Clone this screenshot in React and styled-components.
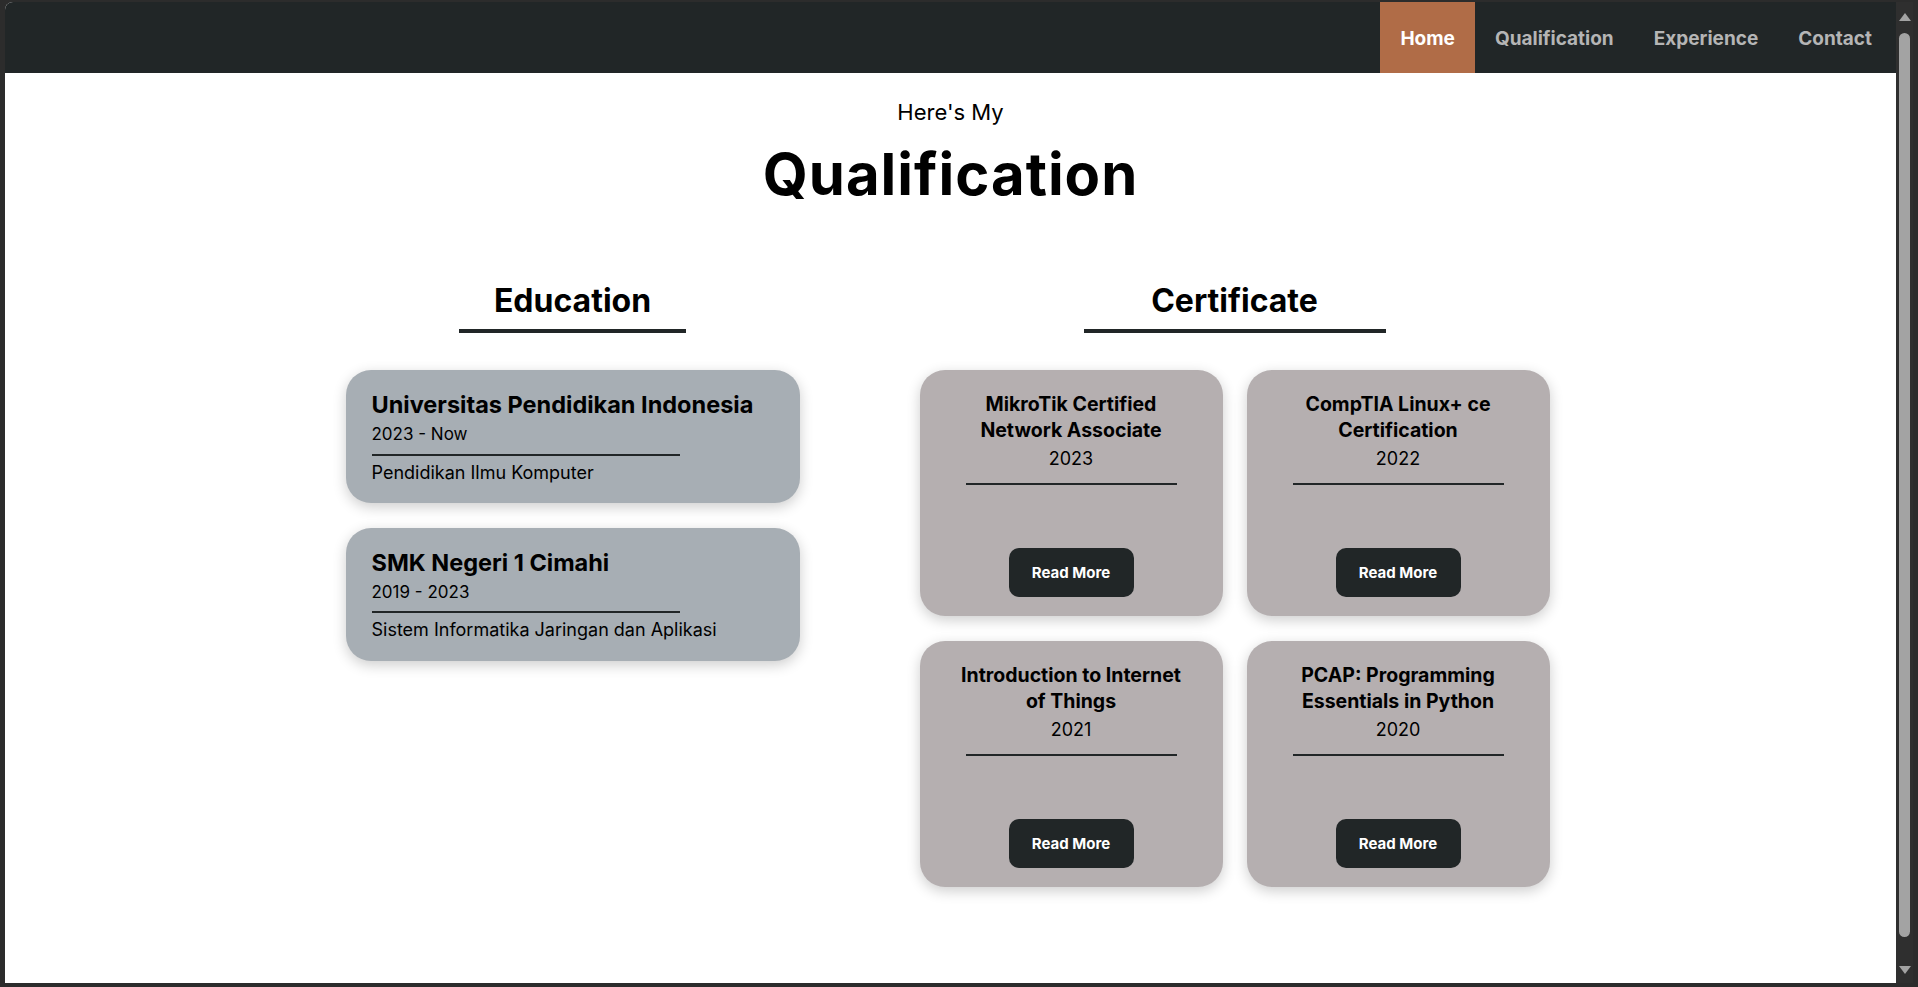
import React from "react";
import styled, { createGlobalStyle } from "styled-components";

/* ============================ Styles ==================================== */
const GlobalStyle = createGlobalStyle`
    html, body {
        margin:0;
        padding:0;
        height:100%;
        overflow:hidden;
        background-color:#2c2c2c;
        font-family:"Inter", "Open Sans", sans-serif;
    }
`;

const Sframe = styled.div` // ブラウザ枠
    display:flex;
    height:100vh;
    box-sizing:border-box;
    padding:2px 5px 4px 5px;
`;

const Spage = styled.div` // ページ本体
    flex:1;
    display:flex;
    flex-direction:column;
    background-color:#FFFFFF;
    border-radius:8px 0px 0px 0px;
    overflow:hidden;
`;

const Sscrollbar = styled.div` // スクロールバー
    width:17px;
    display:flex;
    flex-direction:column;
    align-items:center;
    background-color:#2f2f2f;
    padding:11px 0px 9px 0px;
    box-sizing:border-box;
`;

const Sarrow = styled.div`
    width:0;
    height:0;
    border-left:6px solid transparent;
    border-right:6px solid transparent;
    ${props => props.down
        ? "border-top:8px solid #a3a3a3;"
        : "border-bottom:8px solid #a3a3a3;"}
`;

const Sthumb = styled.div`
    flex:1;
    width:11px;
    margin:12px 0px 29px 0px;
    border-radius:6px;
    background-color:#a3a3a3;
`;

const Snav = styled.nav` // ナビゲーションバー
    display:flex;
    justify-content:flex-end;
    height:71px;
    padding-right:4px;
    background-color:#212627;
    flex-shrink:0;
`;

const SnavItem = styled.a`
    display:flex;
    align-items:center;
    padding:1px 20px 0px 20px;
    font-size:19px;
    font-weight:700;
    text-decoration:none;
    color:${props => props.active ? "#FFFFFF" : "#b5b5b5"};
    background-color:${props => props.active ? "#b06c47" : "transparent"};
`;

const SheroSmall = styled.p`
    margin:26px 0px 0px 0px;
    text-align:center;
    font-size:22px;
    line-height:1.2;
    color:#000000;
`;

const SheroTitle = styled.h1`
    margin:15px 0px 0px 0px;
    text-align:center;
    font-size:58px;
    letter-spacing:1px;
    line-height:1.2;
    font-weight:700;
    color:#000000;
`;

const Scolumns = styled.div` // 学歴と資格の2カラム
    display:flex;
    justify-content:center;
    align-items:flex-start;
    gap:120px;
    margin:72px 6px 0px 0px;
`;

const Scolumn = styled.section`
    display:flex;
    flex-direction:column;
    align-items:center;
    width:${props => props.w}px;
`;

const SsectionTitle = styled.h2`
    margin:0;
    font-size:32px;
    line-height:1.2;
    font-weight:700;
    color:#000000;
`;

const SsectionLine = styled.div`
    width:${props => props.w}px;
    height:4px;
    margin:9px 0px 37px 0px;
    background-color:#212627;
`;

const ScardList = styled.div`
    display:flex;
    flex-direction:column;
    gap:25px;
    width:100%;
`;

const SeduCard = styled.div` // 学歴カード
    background-color:#a7aeb4;
    border-radius:25px;
    padding:20px 26px 20px 26px;
    box-shadow:0px 4px 14px rgba(0, 0, 0, 0.2);
`;

const SeduTitle = styled.h3`
    margin:0;
    font-size:23.5px;
    line-height:29px;
    font-weight:700;
    color:#000000;
`;

const SeduYear = styled.p`
    margin:5px 0px 0px 0px;
    font-size:17px;
    line-height:1.25;
    color:#000000;
`;

const SeduMajor = styled.p`
    margin:6px 0px 0px 0px;
    font-size:18px;
    line-height:1.2;
    color:#000000;
`;

const SeduLine = styled.div`
    width:308px;
    height:2px;
    margin-top:8px;
    background-color:#212627;
`;

const ScertGrid = styled.div`
    display:grid;
    grid-template-columns:303px 303px;
    column-gap:24px;
    row-gap:25px;
`;

const ScertCard = styled.div` // 資格カード
    display:flex;
    flex-direction:column;
    align-items:center;
    height:246px;
    box-sizing:border-box;
    padding:21px 36px 19px 36px;
    background-color:#b5afb0;
    border-radius:25px;
    box-shadow:0px 4px 14px rgba(0, 0, 0, 0.2);
    text-align:center;
`;

const ScertTitle = styled.h4`
    margin:0;
    font-size:19.5px;
    line-height:26px;
    font-weight:700;
    color:#000000;
`;

const ScertYear = styled.p`
    margin:5px 0px 0px 0px;
    font-size:18px;
    line-height:1.25;
    color:#000000;
`;

const ScertLine = styled.div`
    width:211px;
    height:2px;
    margin-top:12px;
    background-color:#212627;
`;

const Sbutton = styled.button`
    margin-top:auto;
    width:125px;
    height:49px;
    border:none;
    border-radius:10px;
    background-color:#212627;
    color:#FFFFFF;
    font-family:inherit;
    font-size:15px;
    font-weight:700;
    cursor:pointer;
`;

/* ============================== Arry ==================================== */
const navItems = ["Home", "Qualification", "Experience", "Contact"];

const education = [
    {school:"Universitas Pendidikan Indonesia", year:"2023 - Now", major:"Pendidikan Ilmu Komputer"},
    {school:"SMK Negeri 1 Cimahi", year:"2019 - 2023", major:"Sistem Informatika Jaringan dan Aplikasi"},
];

const certificates = [
    {title:"MikroTik Certified Network Associate", year:"2023"},
    {title:"CompTIA Linux+ ce Certification", year:"2022"},
    {title:"Introduction to Internet of Things", year:"2021"},
    {title:"PCAP: Programming Essentials in Python", year:"2020"},
];

/* ============================ Components ================================ */
const EduCard = (props)=>{
    return(
        <SeduCard>
            <SeduTitle>{props.school}</SeduTitle>
            <SeduYear>{props.year}</SeduYear>
            <SeduLine />
            <SeduMajor>{props.major}</SeduMajor>
        </SeduCard>
    )
};

const CertCard = (props)=>{
    return(
        <ScertCard>
            <ScertTitle>{props.title}</ScertTitle>
            <ScertYear>{props.year}</ScertYear>
            <ScertLine />
            <Sbutton>Read More</Sbutton>
        </ScertCard>
    )
};

/* ============================ Main ====================================== */
export default function App(){
    return(
        <Sframe>
            <GlobalStyle />
            <Spage>
                <Snav>
                    {navItems.map(item=><SnavItem key={item} href="#" active={item === "Home"}>{item}</SnavItem>)}
                </Snav>
                <SheroSmall>Here's My</SheroSmall>
                <SheroTitle>Qualification</SheroTitle>
                <Scolumns>
                    <Scolumn w={454}>
                        <SsectionTitle>Education</SsectionTitle>
                        <SsectionLine w={227} />
                        <ScardList>
                            {education.map(e=><EduCard key={e.school} {...e} />)}
                        </ScardList>
                    </Scolumn>
                    <Scolumn w={630}>
                        <SsectionTitle>Certificate</SsectionTitle>
                        <SsectionLine w={302} />
                        <ScertGrid>
                            {certificates.map(c=><CertCard key={c.title} {...c} />)}
                        </ScertGrid>
                    </Scolumn>
                </Scolumns>
            </Spage>
            <Sscrollbar>
                <Sarrow />
                <Sthumb />
                <Sarrow down />
            </Sscrollbar>
        </Sframe>
    )
};
